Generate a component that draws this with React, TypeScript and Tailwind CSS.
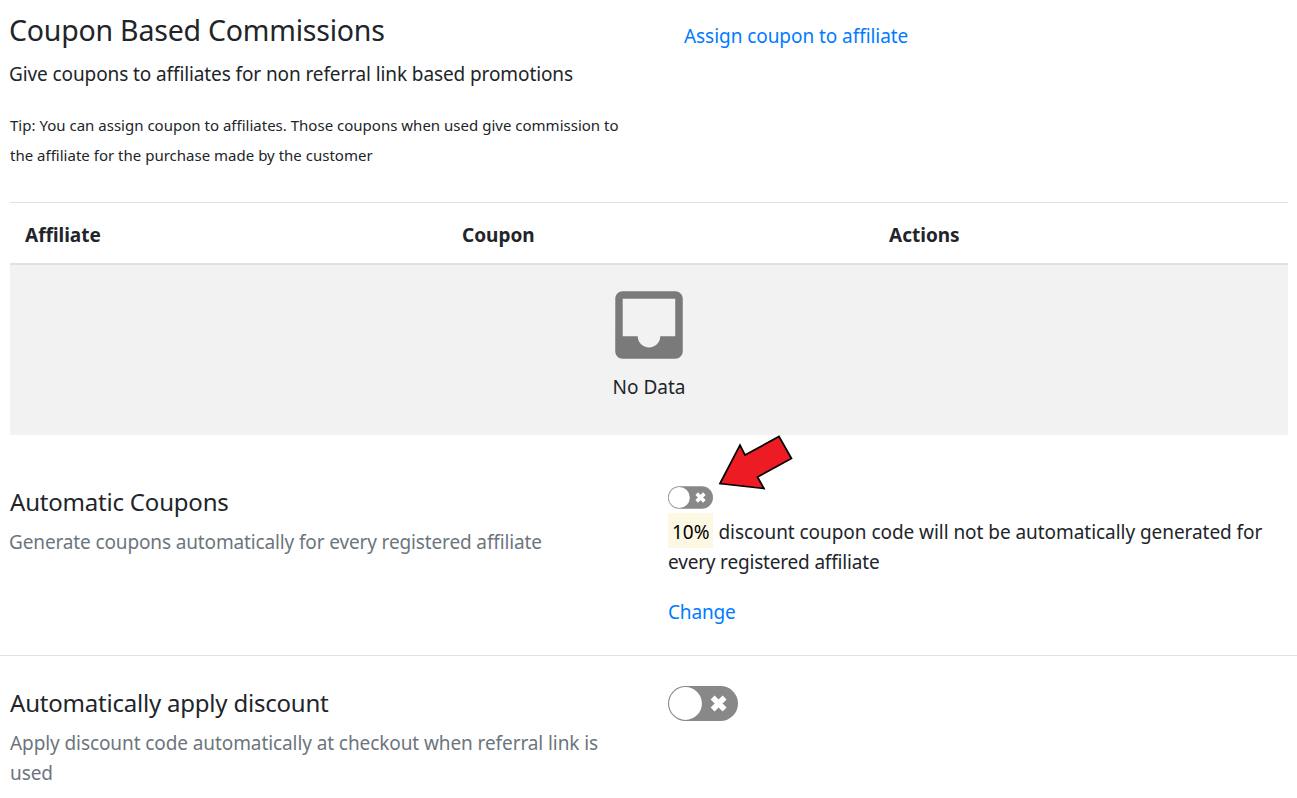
function Toggle({ className }: { className: string }) {
  return (
    <button type="button" role="switch" aria-checked="false" className={`block ${className}`}>
      <svg viewBox="0 0 70 35" className="block h-full w-full">
        <rect width="70" height="35" rx="17.5" fill="#888" />
        <circle cx="17.5" cy="17.5" r="16.4" fill="#fff" />
        <path d="M44.6 11.5 56.6 23.5M56.6 11.5 44.6 23.5" stroke="#fff" strokeWidth="5.6" />
      </svg>
    </button>
  );
}

export default function App() {
  return (
    <main className="h-[798px] w-[1297px] overflow-hidden bg-white font-['Noto_Sans','Open_Sans',sans-serif] text-[19px] leading-[30px] text-[#212529]">
      <header className="flex pl-[10px] pt-[12px]">
        <div className="w-[674px] whitespace-nowrap">
          <h1 className="-ml-px text-[28.5px] leading-[36px] tracking-[-0.22px]">Coupon Based Commissions</h1>
          <p className="-ml-px mt-[11px] tracking-[-0.105px]">
            Give coupons to affiliates for non referral link based promotions
          </p>
          <p className="mt-[21px] text-[15px] tracking-[0.01px]">
            Tip: You can assign coupon to affiliates. Those coupons when used give commission to
            <br />
            the affiliate for the purchase made by the customer
          </p>
        </div>
        <a className="mt-[9px] self-start tracking-[-0.06px] text-[#007bff]">Assign coupon to affiliate</a>
      </header>

      <section className="mx-[10px] mr-[9px] mt-[32px] border-t border-[#dee2e6]">
        <div className="flex h-[62px] items-center border-b-2 border-[#dee2e6] pl-[15px] pt-[4px] font-bold">
          <span className="w-[437px]">Affiliate</span>
          <span className="w-[427px]">Coupon</span>
          <span>Actions</span>
        </div>
        <div className="flex h-[170px] flex-col items-center bg-[#f2f2f2] pt-[15px]">
          <svg viewBox="0 0 24 24" className="size-[90px]" fill="#7a7a7a">
            <path d="M19 3H4.99c-1.11 0-1.98.89-1.98 2L3 19c0 1.1.88 2 1.99 2H19c1.1 0 2-.9 2-2V5c0-1.11-.9-2-2-2zm0 12h-4c0 1.66-1.35 3-3 3s-3-1.34-3-3H4.99V5H19v10z" />
          </svg>
          <span className="mt-[2px]">No Data</span>
        </div>
      </section>

      <section className="relative flex h-[221px] border-b border-[#dee2e6] pl-[10px]">
        <div className="w-[658px] whitespace-nowrap pt-[52px]">
          <h2 className="text-[24px] tracking-[-0.2px]">Automatic Coupons</h2>
          <p className="-ml-px mt-[10px] tracking-[-0.135px] text-[#6c757d]">
            Generate coupons automatically for every registered affiliate
          </p>
        </div>
        <div className="whitespace-nowrap pt-[51px]">
          <Toggle className="h-[23px] w-[45px]" />
          <p className="mt-[8px] tracking-[-0.05px]">
            <mark className="mr-[5px] bg-[#fcf8e3] px-[4px] pb-[3px] pt-[6px] text-black">10%</mark>
            discount coupon code will not be automatically generated for
            <br />
            <span className="tracking-[-0.18px]">every registered affiliate</span>
          </p>
          <a className="mt-[20px] block tracking-[-0.15px] text-[#007bff]">Change</a>
        </div>
        <svg viewBox="0 0 80 60" className="absolute left-[716px] top-0 h-[60px] w-[80px]">
          <path d="M4 48.5 24 10 29 20 63 1.5 75.5 23.5 41.5 42 48 53.5Z" fill="#ed1c24" stroke="#000" strokeWidth="1.7" />
        </svg>
      </section>

      <section className="flex pl-[10px] pt-[30px]">
        <div className="w-[658px] whitespace-nowrap pt-[2px]">
          <h2 className="text-[24px] tracking-[-0.21px]">Automatically apply discount</h2>
          <p className="mt-[10px] tracking-[-0.09px] text-[#6c757d]">
            Apply discount code automatically at checkout when referral link is
            <br />
            used
          </p>
        </div>
        <Toggle className="h-[35px] w-[70px]" />
      </section>
    </main>
  );
}
